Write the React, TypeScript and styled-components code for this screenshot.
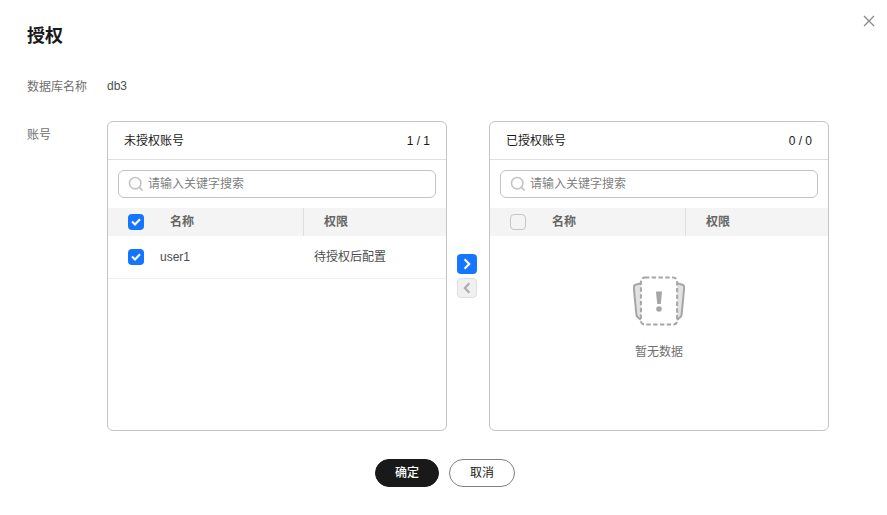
import React from 'react';
import styled, { createGlobalStyle } from 'styled-components';

const GlobalStyle = createGlobalStyle`
  html,
  body {
    margin: 0;
    padding: 0;
    background: #fff;
  }

  body {
    font-family: 'Liberation Sans', 'Noto Sans CJK SC', sans-serif;
    font-size: 12px;
    line-height: 16px;
    color: #191919;
  }
`;

const Dialog = styled.div`
  position: relative;
  box-sizing: border-box;
  width: 887px;
  height: 515px;
  padding: 24px 58px 0 27px;
  overflow: hidden;
`;

const CloseButton = styled.button`
  position: absolute;
  top: 14px;
  right: 11px;
  width: 14px;
  height: 14px;
  padding: 0;
  border: 0;
  background: none;
  color: #8a8a8a;
  display: flex;
`;

const Title = styled.h2`
  margin: 0 0 30px;
  height: 24px;
  font-size: 18px;
  line-height: 24px;
  font-weight: 700;
  color: #191919;
`;

const FormRow = styled.div<{ $gap: number }>`
  display: flex;
  margin-bottom: ${(props) => props.$gap}px;
`;

const Label = styled.div<{ $top: number }>`
  width: 80px;
  color: #707070;
  padding-top: ${(props) => props.$top}px;
`;

const Value = styled.div`
  color: #4d4d4d;
`;

const Transfer = styled.div`
  display: flex;
  align-items: center;
`;

const Panel = styled.div`
  box-sizing: border-box;
  width: 340px;
  height: 310px;
  border: 1px solid #c4c4c4;
  border-radius: 6px;
  overflow: hidden;
  display: flex;
  flex-direction: column;
`;

const PanelHead = styled.div`
  box-sizing: border-box;
  height: 38px;
  flex: none;
  padding: 0 16px;
  display: flex;
  align-items: center;
  justify-content: space-between;
  border-bottom: 1px solid #dfdfdf;
  color: #191919;
`;

const SearchBox = styled.div`
  box-sizing: border-box;
  height: 28px;
  margin: 10px 10px;
  padding: 0 9px;
  display: flex;
  align-items: center;
  gap: 4px;
  border: 1px solid #c4c4c4;
  border-radius: 6px;
  color: #c4c4c4;
`;

const SearchInput = styled.input`
  flex: 1;
  min-width: 0;
  border: 0;
  outline: 0;
  padding: 0;
  font: inherit;
  background: none;

  &::placeholder {
    color: #808080;
    opacity: 1;
  }
`;

const TableHead = styled.div`
  flex: none;
  height: 28px;
  background: #f4f4f4;
  display: flex;
  align-items: center;
  font-weight: 700;
  color: #666;
`;

const NameHead = styled.div`
  box-sizing: border-box;
  width: 196px;
  height: 100%;
  padding-left: 20px;
  display: flex;
  align-items: center;
  border-right: 1px solid #dfdfdf;
`;

const HeadText = styled.span`
  margin-left: 26px;
`;

const RightsHead = styled.div`
  padding-left: 20px;
`;

const TableRow = styled.div`
  flex: none;
  box-sizing: border-box;
  height: 43px;
  padding-left: 20px;
  display: flex;
  align-items: center;
  border-bottom: 1px solid #ededed;
  color: #4d4d4d;
`;

const UserCell = styled.div`
  width: 154px;
  margin-left: 16px;
`;

const Check = styled.span<{ $checked?: boolean }>`
  box-sizing: border-box;
  flex: none;
  width: 16px;
  height: 16px;
  border-radius: 4px;
  display: flex;
  align-items: center;
  justify-content: center;
  background: ${(props) => (props.$checked ? '#1476ff' : '#f4f4f4')};
  border: ${(props) => (props.$checked ? '0' : '1px solid #c4c4c4')};
  color: #fff;
`;

const MoveColumn = styled.div`
  box-sizing: border-box;
  width: 42px;
  padding-left: 10px;
  display: flex;
  flex-direction: column;
  gap: 4px;
`;

const MoveButton = styled.button<{ $active?: boolean }>`
  box-sizing: border-box;
  width: 20px;
  height: 20px;
  padding: 0;
  border-radius: 4px;
  display: flex;
  align-items: center;
  justify-content: center;
  background: ${(props) => (props.$active ? '#1476ff' : '#f0f0f0')};
  border: ${(props) => (props.$active ? '0' : '1px solid #dfdfdf')};
  color: ${(props) => (props.$active ? '#fff' : '#adadad')};
`;

const Empty = styled.div`
  flex: 1;
  padding-top: 40px;
  display: flex;
  flex-direction: column;
  align-items: center;
  gap: 18px;
  color: #707070;
`;

const Footer = styled.div`
  display: flex;
  justify-content: center;
  gap: 10px;
  padding-left: 34px;
`;

const FooterButton = styled.button<{ $primary?: boolean }>`
  box-sizing: border-box;
  width: ${(props) => (props.$primary ? 64 : 66)}px;
  height: 28px;
  padding: 0;
  border-radius: 14px;
  font: inherit;
  font-weight: ${(props) => (props.$primary ? 500 : 400)};
  background: ${(props) => (props.$primary ? '#191919' : '#fff')};
  border: 1px solid ${(props) => (props.$primary ? '#191919' : '#808080')};
  color: ${(props) => (props.$primary ? '#fff' : '#191919')};
`;

const CheckMark = () => (
  <svg width="10" height="8" viewBox="0 0 10 8" fill="none">
    <path d="M1 3.4 4 6.4 9 1.2" stroke="currentColor" strokeWidth="2.1" />
  </svg>
);

const SearchIcon = () => (
  <svg width="16" height="16" viewBox="0 0 16 16" fill="none" stroke="currentColor">
    <circle cx="7.2" cy="7.2" r="5.7" strokeWidth="1.6" />
    <path d="M11.4 11.4 14.6 14.6" strokeWidth="1.8" />
  </svg>
);

const Chevron = ({ left }: { left?: boolean }) => (
  <svg width="8" height="12" viewBox="0 0 8 12" fill="none">
    <path
      d={left ? 'M6.4 1.2 1.8 6l4.6 4.8' : 'M1.6 1.2 6.2 6l-4.6 4.8'}
      stroke="currentColor"
      strokeWidth="2.2"
    />
  </svg>
);

const EmptyIcon = () => (
  <svg width="52" height="50" viewBox="0 0 52 50" fill="none">
    <path d="M7 7.5 1 10l3 29 4 5V7.5zM45 7.5l6 2.5-3 29-4 5V7.5z" fill="#e2e2e2" />
    <path
      d="M7 7.5 2.6 8.8C1.2 9.3.7 10.4.8 11.6l2.6 27c.1 1 .5 1.7 1.2 2.3L8 44M45 7.5l4.4 1.3c1.4.5 1.9 1.6 1.8 2.8l-2.6 27c-.1 1-.5 1.7-1.2 2.3L44 44"
      stroke="#a6a6a6"
      strokeWidth="2"
    />
    <rect
      x="7.9"
      y="1.4"
      width="36.2"
      height="47.2"
      rx="4"
      fill="#fff"
      stroke="#a6a6a6"
      strokeWidth="2"
      strokeDasharray="4.4 2.4"
    />
    <path d="M23 15.5h6l-1.2 12.5h-3.6L23 15.5z" fill="#a6a6a6" />
    <circle cx="26" cy="33" r="2.8" fill="#a6a6a6" />
  </svg>
);

const PanelSearch = () => (
  <SearchBox>
    <SearchIcon />
    <SearchInput placeholder="请输入关键字搜索" />
  </SearchBox>
);

const App: React.FC = () => (
  <Dialog>
    <GlobalStyle />
    <CloseButton>
      <svg width="14" height="14" viewBox="0 0 14 14" fill="none">
        <path d="M2 2l10 10M12 2 2 12" stroke="currentColor" strokeWidth="1.3" />
      </svg>
    </CloseButton>
    <Title>授权</Title>
    <FormRow $gap={26}>
      <Label $top={1}>数据库名称</Label>
      <Value>db3</Value>
    </FormRow>
    <FormRow $gap={28}>
      <Label $top={6}>账号</Label>
      <Transfer>
        <Panel>
          <PanelHead>
            <span>未授权账号</span>
            <span>1 / 1</span>
          </PanelHead>
          <PanelSearch />
          <TableHead>
            <NameHead>
              <Check $checked>
                <CheckMark />
              </Check>
              <HeadText>名称</HeadText>
            </NameHead>
            <RightsHead>权限</RightsHead>
          </TableHead>
          <TableRow>
            <Check $checked>
              <CheckMark />
            </Check>
            <UserCell>user1</UserCell>
            <span>待授权后配置</span>
          </TableRow>
        </Panel>
        <MoveColumn>
          <MoveButton $active>
            <Chevron />
          </MoveButton>
          <MoveButton>
            <Chevron left />
          </MoveButton>
        </MoveColumn>
        <Panel>
          <PanelHead>
            <span>已授权账号</span>
            <span>0 / 0</span>
          </PanelHead>
          <PanelSearch />
          <TableHead>
            <NameHead>
              <Check />
              <HeadText>名称</HeadText>
            </NameHead>
            <RightsHead>权限</RightsHead>
          </TableHead>
          <Empty>
            <EmptyIcon />
            <span>暂无数据</span>
          </Empty>
        </Panel>
      </Transfer>
    </FormRow>
    <Footer>
      <FooterButton $primary>确定</FooterButton>
      <FooterButton>取消</FooterButton>
    </Footer>
  </Dialog>
);

export default App;
